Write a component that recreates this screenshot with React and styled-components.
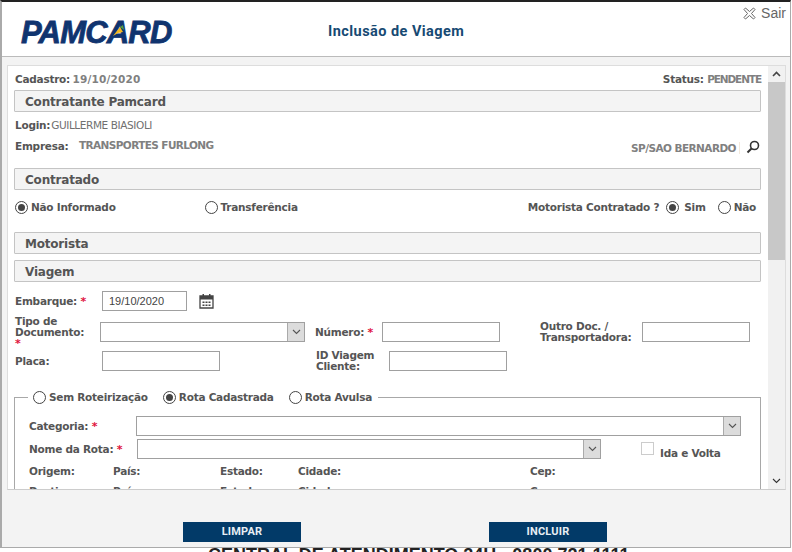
import React from "react";
import styled, { createGlobalStyle } from "styled-components";

const Global = createGlobalStyle`
  html, body { margin: 0; padding: 0; width: 792px; height: 552px; overflow: hidden; background: #fff; }
  * { box-sizing: border-box; }
`;
const Page = styled.div`
  width: 792px; height: 552px; overflow: hidden; display: flex; flex-direction: column;
  font-family: "DejaVu Sans", Verdana, sans-serif; font-size: 10.5px; letter-spacing: -0.25px; color: #555; background:#fff;
`;
const Modal = styled.div`
  width: 791px; height: 548px; flex: none; border-top: 2px solid #222; border-left: 2px solid #aaa;
  border-right: 1px solid #aaa; border-bottom: 1px solid #aaa; background: #f3f3f3;
  display: flex; flex-direction: column;
`;
const Behind = styled.div`
  height: 4px; flex: none; overflow: hidden; padding: 2px 0 0 208px; font: 700 18px/11px "Liberation Sans", sans-serif;
  color: #222; white-space: nowrap; letter-spacing: 0;
`;
const Header = styled.header`
  height: 55px; flex: none; background: #fff; border-bottom: 1px solid #bbb; position: relative;
  display: flex; align-items: flex-start; padding-left: 19px; letter-spacing: 0;
`;
const Logo = styled.div`
  width: 152px; height: 30px; margin-top: 16px; position: relative;
  font: italic 700 31px/30px "Liberation Sans", sans-serif; color: #10346f; letter-spacing: -0.8px;
  -webkit-text-stroke: 0.8px #10346f; white-space: nowrap;
`;
const LogoMark = styled.svg`
  position: absolute; left: 90px; top: 5px; width: 16px; height: 16px;
`;
const Title = styled.h1`
  margin: 21px 0 0 155px; font: 700 14.5px/17px Roboto, "Liberation Sans", sans-serif; color: #174a73; letter-spacing: 0.45px;
`;
const Exit = styled.div`
  position: absolute; right: 4px; top: 3px; display: flex; align-items: center; gap: 5px;
  font: 14px/17px "Liberation Sans", sans-serif; color: #666;
`;
const ExitIcon = styled.svg` width: 13px; height: 13px; `;
const Main = styled.div`
  margin: 8px 0 0 5px; width: 779px; height: 425px; flex: none; display: flex; background: #fff;
  border: 1px solid #ddd; border-bottom: 1px solid #ccc; overflow: hidden;
`;
const Content = styled.div`
  width: 760px; flex: none; padding: 6px 7px 0 6px; overflow: hidden; height: 100%;
`;
const Scroll = styled.div`
  width: 17px; flex: none; background: #f1f1f1; display: flex; flex-direction: column; align-items: stretch;
`;
const ScrollBtn = styled.div`
  height: 16px; flex: none; display: flex; align-items: center; justify-content: center;
`;
const Thumb = styled.div` height: 178px; flex: none; background: #c8c8c8; `;
const ScrollGap = styled.div` flex: 1; `;
const Row = styled.div`
  display: flex; align-items: ${p => p.$align || "center"}; height: ${p => p.$h}px;
  margin-top: ${p => p.$mt || 0}px; padding-left: ${p => p.$pl || 0}px;
`;
const Between = styled(Row)` justify-content: space-between; `;
const Label = styled.span`
  font-weight: 700; color: #555; white-space: nowrap; flex: none;
  width: ${p => p.$w ? p.$w + "px" : "auto"}; margin-left: ${p => p.$ml || 0}px;
  margin-top: ${p => p.$mt || 0}px; line-height: 11px;
`;
const WrapLabel = styled(Label)` white-space: normal; `;
const Value = styled.span`
  font-weight: 700; color: #808080; white-space: nowrap;
  letter-spacing: ${p => p.$ls ?? -0.55}px; margin-left: ${p => p.$ml || 0}px; margin-top: ${p => p.$mt || 0}px;
`;
const PlainValue = styled(Value)` font-weight: 400; color: #707070; letter-spacing: -0.4px; `;
const Tick = styled.span` width: 1px; height: 12px; flex: none; margin: 5px 0 0 3px; background: #f3e9dc; `;
const Star = styled.span` color: #e0123c; font-weight: 700; font-size: 11px; `;
const Section = styled.div`
  height: 22px; margin-top: ${p => p.$mt || 0}px; background: #f4f4f4; border: 1px solid #c4c4c4;
  padding: 1px 0 0 10px; display: flex; align-items: center; font-weight: 700; font-size: 12px; color: #555;
  border-radius: 1px; letter-spacing: -0.2px;
`;
const Radio = styled.span`
  width: 13px; height: 13px; flex: none; border-radius: 50%; border: 1px solid #444; background: #fff;
  display: inline-flex; align-items: center; justify-content: center; margin-left: ${p => p.$ml || 0}px;
  &::after { content: ""; width: 7px; height: 7px; border-radius: 50%; background: ${p => p.$on ? "#444" : "transparent"}; }
`;
const RadioText = styled(Label)` margin-left: ${p => p.$gap ?? 3}px; `;
const Spacer = styled.div` flex: 1; `;
const RightPad = styled.div` width: 5px; flex: none; `;
const Input = styled.div`
  flex: none; width: ${p => p.$w}px; height: 20px; border: 1px solid #a0a0a0; background: #fff;
  margin-left: ${p => p.$ml || 0}px; padding-left: 6px; font: 11px/19px "Liberation Sans", sans-serif; color: #444; letter-spacing: 0;
`;
const Select = styled(Input)` display: flex; justify-content: flex-end; padding: 0; `;
const Arrow = styled.div`
  width: 17px; height: 100%; background: #dcdcdc; border-left: 1px solid #aaa;
  display: flex; align-items: center; justify-content: center;
`;
const Fieldset = styled.div`
  margin-top: 26px; border: 1px solid #a8a8a8; height: 120px; padding: 0 0 0 14px; position: relative;
`;
const Legend = styled.div`
  position: absolute; left: 13px; top: -8px; height: 15px; display: flex; align-items: center; background: #fff; padding: 0 6px 0 5px;
`;
const Check = styled.span`
  width: 13px; height: 13px; flex: none; border: 1px solid #ccc; margin-left: ${p => p.$ml}px; align-self: flex-start; margin-top: 3px;
`;
const FooterBar = styled.div`
  flex: 1; display: flex; padding: 32px 0 0 181px; gap: 188px;
`;
const Btn = styled.button`
  width: 118px; height: 20px; border: 0; padding: 0; background: #023a68; color: #e8eef4;
  font: 700 11px/20px Roboto, "Liberation Sans", sans-serif; letter-spacing: 0.2px;
`;

const Chevron = ({ c = "#555" }) => (
  <svg width="9" height="6" viewBox="0 0 9 6"><path d="M1 1l3.5 3.5L8 1" fill="none" stroke={c} strokeWidth="1.1" /></svg>
);
const Sel = ({ w, ml }) => <Select $w={w} $ml={ml}><Arrow><Chevron /></Arrow></Select>;
const Place = ({ title }) => (
  <Row $h="20">
    <Label $w="84">{title}</Label><Label $w="107">País:</Label><Label $w="78">Estado:</Label><Label $w="232">Cidade:</Label><Label>Cep:</Label>
  </Row>
);

export default function App() {
  return (
    <Page>
      <Global />
      <Modal>
        <Header>
          <Logo>
            PAMCARD
            <LogoMark viewBox="0 0 16 16">
              <path d="M2 13L9 4l3 5-5 1z" fill="#f5b81c" />
              <path d="M9 4l3-2 1 5z" fill="#4f9b43" />
            </LogoMark>
          </Logo>
          <Title>Inclusão de Viagem</Title>
          <Exit>
            <ExitIcon viewBox="0 0 13 13">
              <path d="M2.5 1L6.5 4.500 10.500 1 12 2.500 8.500 6.500 12 10.500 10.500 12 6.500 8.500 2.500 12 1 10.500 4.500 6.500 1 2.500z" fill="#fff" stroke="#666" strokeWidth="1" />
            </ExitIcon>
            Sair
          </Exit>
        </Header>
        <Main>
          <Content>
            <Between $h="15" $pl="1">
              <Label>Cadastro: <Value $ls={0.2} $ml="-1">19/10/2020</Value></Label>
              <Label>Status: <Value $ls={-1.1}>PENDENTE</Value></Label>
            </Between>
            <Section $mt="3">Contratante Pamcard</Section>
            <Row $h="14" $mt="6" $pl="1"><Label>Login:</Label><PlainValue $ml="1">GUILLERME BIASIOLI</PlainValue></Row>
            <Row $h="20" $mt="5" $pl="1" $align="flex-start">
              <Label $mt={4} $w="64">Empresa:</Label>
              <Value $mt={2} $ls={-0.6}>TRANSPORTES FURLONG</Value>
              <Spacer />
              <Value $mt={5}>SP/SAO BERNARDO</Value>
              <Tick />
              <svg width="14" height="14" viewBox="0 0 14 14" style={{ margin: "3px 1px 0 6px" }}>
                <circle cx="8.500" cy="5.500" r="4" fill="none" stroke="#333" strokeWidth="1.600" />
                <path d="M5.500 8.500L1.500 12.500" stroke="#333" strokeWidth="2" />
              </svg>
            </Row>
            <Section $mt="11">Contratado</Section>
            <Row $h="16" $mt="9">
              <Radio $on $ml="1" /><RadioText>Não Informado</RadioText>
              <Radio $ml="89" /><RadioText>Transferência</RadioText>
              <Spacer />
              <Label>Motorista Contratado ?</Label>
              <Radio $on $ml="7" /><RadioText $gap="5">Sim</RadioText>
              <Radio $ml="12" /><RadioText>Não</RadioText>
              <RightPad />
            </Row>
            <Section $mt="17">Motorista</Section>
            <Section $mt="6">Viagem</Section>
            <Row $h="20" $mt="9" $pl="1">
              <Label $w="87">Embarque: <Star>*</Star></Label>
              <Input $w="85">19/10/2020</Input>
              <svg width="15" height="16" viewBox="0 0 15 16" style={{ marginLeft: 12 }}>
                <path d="M1 3h13v12H1z" fill="#fff" stroke="#444" strokeWidth="1.300" />
                <path d="M1 3h13v3.500H1zM3.500 1h1.500v3H3.500zM10 1h1.500v3H10z" fill="#444" />
                <path d="M3.500 8.500h2v1.500h-2zM6.500 8.500h2v1.500h-2zM9.500 8.500h2v1.500h-2zM3.500 11.500h2V13h-2zM6.500 11.500h2V13h-2zM9.500 11.500h2V13h-2z" fill="#444" />
              </svg>
            </Row>
            <Row $h="20" $mt="11" $pl="1">
              <WrapLabel $w="85">Tipo de Documento:<br /><Star>*</Star></WrapLabel>
              <Sel w={205} />
              <Label $ml="10" $w="67">Número: <Star>*</Star></Label>
              <Input $w="118" />
              <WrapLabel $ml="40" $w="102">Outro Doc. / Transportadora:</WrapLabel>
              <Input $w="108" />
            </Row>
            <Row $h="20" $mt="9" $pl="1">
              <Label $w="87">Placa:</Label>
              <Input $w="118" />
              <WrapLabel $ml="96" $w="73">ID Viagem Cliente:</WrapLabel>
              <Input $w="118" />
            </Row>
            <Fieldset>
              <Legend>
                <Radio /><RadioText>Sem Roteirização</RadioText>
                <Radio $on $ml="15" /><RadioText>Rota Cadastrada</RadioText>
                <Radio $ml="15" /><RadioText>Rota Avulsa</RadioText>
              </Legend>
              <Row $h="20" $mt="18">
                <Label $w="107">Categoria: <Star>*</Star></Label>
                <Sel w={605} />
              </Row>
              <Row $h="20" $mt="3">
                <Label $w="108">Nome da Rota: <Star>*</Star></Label>
                <Sel w={464} />
                <Check $ml="40" />
                <Label $ml="6" $mt={8}>Ida e Volta</Label>
              </Row>
              <Row $h="2" />
              <Place title="Origem:" />
              <Place title="Destino:" />
            </Fieldset>
          </Content>
          <Scroll>
            <ScrollBtn><svg width="9" height="6" viewBox="0 0 9 6"><path d="M1 5l3.500-3.500L8 5" fill="none" stroke="#444" strokeWidth="1.600" /></svg></ScrollBtn>
            <Thumb />
            <ScrollGap />
            <ScrollBtn><Chevron c="#333" /></ScrollBtn>
          </Scroll>
        </Main>
        <FooterBar><Btn>LIMPAR</Btn><Btn>INCLUIR</Btn></FooterBar>
      </Modal>
      <Behind>CENTRAL DE ATENDIMENTO 24H - 0800 721 1111</Behind>
    </Page>
  );
}
